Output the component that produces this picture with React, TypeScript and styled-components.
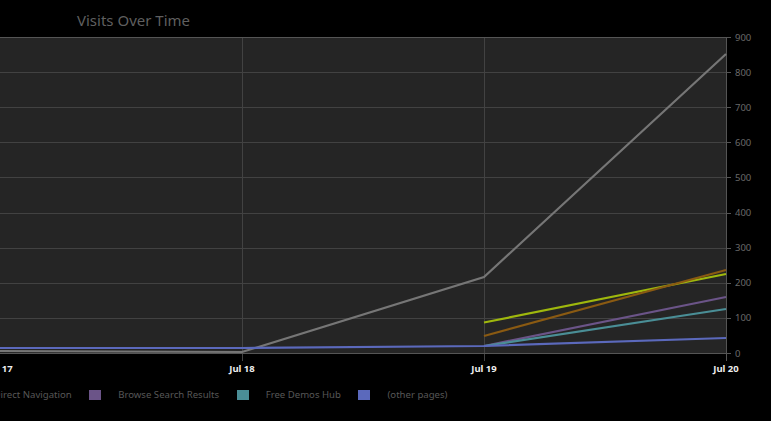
import React from "react";
import styled, { createGlobalStyle } from "styled-components";

const GlobalStyle = createGlobalStyle`
   html, body {
      margin: 0;
      padding: 0;
      background: #000;
      overflow: hidden;
   }
`;

const Page = styled.div`
   width: 771px;
   height: 421px;
   overflow: hidden;
   background: #000;
   font-family: "Noto Sans", sans-serif;
`;

const Title = styled.h2`
   margin: 0;
   height: 37px;
   padding: 11px 0 0 77px;
   box-sizing: border-box;
   font-size: 15px;
   line-height: 18px;
   font-weight: normal;
   color: #5f5f5f;
`;

const ChartSvg = styled.svg`
   display: block;
   overflow: visible;
`;

const AxisLabel = styled.text`
   font-family: "Noto Sans", sans-serif;
   font-size: 9.5px;
   fill: #6a6a6a;
`;

const DateLabel = styled.text`
   font-family: "Noto Sans", sans-serif;
   font-size: 9.5px;
   font-weight: bold;
   fill: #eee;
   text-anchor: middle;
`;

const Legend = styled.div`
   display: flex;
   align-items: center;
   height: 12px;
   margin: 16px 0 0 -35.5px;
   white-space: nowrap;
`;

const LegendItem = styled.div`
   display: flex;
   align-items: center;
   margin-right: 17.5px;
`;

const Swatch = styled.span<{ $color: string }>`
   width: 12px;
   height: 10px;
   margin-right: 17px;
   background: ${({ $color }) => $color};
`;

const LegendText = styled.span`
   font-size: 9.6px;
   line-height: 12px;
   color: #575757;
`;

const PLOT_TOP = 0;
const PLOT_BOTTOM = 316;
const PLOT_RIGHT = 726;
const yFor = (v: number) => PLOT_BOTTOM - (v / 900) * (PLOT_BOTTOM - PLOT_TOP);

const yTicks = [0, 100, 200, 300, 400, 500, 600, 700, 800, 900];
const xTicks = [
   { x: 0, label: "Jul 17" },
   { x: 242, label: "Jul 18" },
   { x: 484, label: "Jul 19" },
   { x: 726, label: "Jul 20" },
];

const series = [
   { color: "#767676", points: "-242,312 0,314 242,315 484,240 726,17" },
   { color: "#9fb80d", points: "484,285.5 726,237" },
   { color: "#8a5a12", points: "484,299 726,233" },
   { color: "#6b5488", points: "484,309 726,260" },
   { color: "#4a8e96", points: "484,309 726,272" },
   { color: "#5b69bc", points: "-242,311 0,311 242,311 484,309 726,301" },
];

const legend = [
   { color: "#888", label: "Direct Navigation" },
   { color: "#6b5488", label: "Browse Search Results" },
   { color: "#4a8e96", label: "Free Demos Hub" },
   { color: "#5b69bc", label: "(other pages)" },
];

function App() {
   return (
      <Page>
         <GlobalStyle />
         <Title>Visits Over Time</Title>
         <ChartSvg width={771} height={336} viewBox="0 0 771 336">
            <rect x={0} y={PLOT_TOP} width={PLOT_RIGHT} height={PLOT_BOTTOM} fill="#252525" />
            {yTicks.slice(1, -1).map((v) => (
               <line key={v} x1={0} x2={PLOT_RIGHT} y1={Math.round(yFor(v)) + 0.5} y2={Math.round(yFor(v)) + 0.5} stroke="#424242" />
            ))}
            {xTicks.slice(1, -1).map((t) => (
               <line key={t.x} x1={t.x + 0.5} x2={t.x + 0.5} y1={0} y2={PLOT_BOTTOM + 8} stroke="#424242" />
            ))}
            <path
               d={`M0 0.5H${PLOT_RIGHT}.5V${PLOT_BOTTOM}.5H0`}
               fill="none"
               stroke="#555"
            />
            <line x1={PLOT_RIGHT + 0.5} x2={PLOT_RIGHT + 0.5} y1={PLOT_BOTTOM} y2={PLOT_BOTTOM + 8} stroke="#555" />
            {yTicks.map((v) => (
               <g key={v}>
                  <line x1={PLOT_RIGHT} x2={PLOT_RIGHT + 5} y1={Math.round(yFor(v)) + 0.5} y2={Math.round(yFor(v)) + 0.5} stroke="#555" />
                  <AxisLabel x={PLOT_RIGHT + 9} y={yFor(v) + 3.5}>{v}</AxisLabel>
               </g>
            ))}
            {series.map((s) => (
               <polyline key={s.color} points={s.points} fill="none" stroke={s.color} strokeWidth={2.2} />
            ))}
            {xTicks.map((t) => (
               <DateLabel key={t.x} x={t.x} y={PLOT_BOTTOM + 19}>{t.label}</DateLabel>
            ))}
         </ChartSvg>
         <Legend>
            {legend.map((item) => (
               <LegendItem key={item.label}>
                  <Swatch $color={item.color} />
                  <LegendText>{item.label}</LegendText>
               </LegendItem>
            ))}
         </Legend>
      </Page>
   );
}

export default App;
